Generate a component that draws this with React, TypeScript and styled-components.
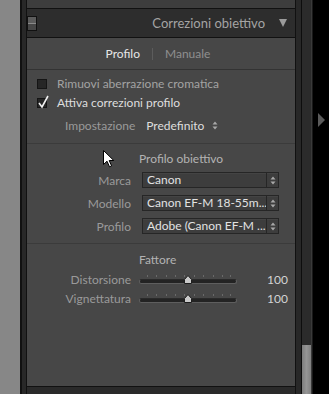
import React from "react";
import styled, { createGlobalStyle } from "styled-components";

const GlobalStyle = createGlobalStyle`
  html, body { margin: 0; padding: 0; background: #000; }
  body {
    width: 329px; height: 394px; overflow: hidden;
    font-family: Lato, "Open Sans", "Liberation Sans", sans-serif;
    font-size: 12px;
  }
  * { box-sizing: border-box; }
`;

const Frame = styled.div`
  position: relative;
  display: flex;
  width: 329px;
  height: 394px;
  background: #000;
`;

const LeftStrip = styled.div`
  width: 20px;
  background: #878787;
`;

const Gutter = styled.div`
  width: 6px;
  background: linear-gradient(to right, #111 0 2px, #282828 2px 100%);
`;

const Column = styled.div`
  width: 270px;
  display: flex;
  flex-direction: column;
  background: #2a2a2a;
  border-left: 1px solid #111;
  border-right: 1px solid #111;
`;

const PrevPanel = styled.div`
  height: 9px;
  background: #3d3d3d;
  border-bottom: 1px solid #111;
`;

const Header = styled.div`
  height: 28px;
  display: flex;
  align-items: center;
  background: #2d2d2d;
  padding-right: 4px;
`;

const SoloSwitch = styled.div`
  width: 10px;
  height: 15px;
  border: 1px solid #111;
  background: linear-gradient(to bottom, #5c5c5c 0 45%, #8a8a8a 45% 55%, #474747 55% 100%);
`;

const HeaderTitle = styled.div`
  flex: 1;
  text-align: right;
  font-size: 13px;
  color: #a4a4a4;
  padding-right: 14px;
`;

const HeaderArrow = styled.div`
  width: 0;
  height: 0;
  border-left: 4.5px solid transparent;
  border-right: 4.5px solid transparent;
  border-top: 8px solid #9b9b9b;
  margin-right: 4px;
`;

const Panel = styled.div`
  flex: 1;
  display: flex;
  flex-direction: column;
  background: #474747;
  border-top: 1px solid #111;
  border-bottom: 1px solid #111;
  margin-bottom: 7px;
`;

const Tabs = styled.div`
  height: 32px;
  display: flex;
  align-items: center;
  justify-content: center;
  gap: 12px;
  padding-right: 6px;
  border-bottom: 1px solid #333;
`;

const Tab = styled.span<{ $active?: boolean }>`
  color: ${(p) => (p.$active ? "#e6e6e6" : "#8f8f8f")};
`;

const TabDivider = styled.span`
  width: 1px;
  height: 12px;
  background: #5c5c5c;
`;

const Section = styled.div<{ $pt: number; $pb: number; $last?: boolean }>`
  padding-top: ${(p) => p.$pt}px;
  padding-bottom: ${(p) => p.$pb}px;
  border-bottom: ${(p) => (p.$last ? "none" : "1px solid #3b3b3b")};
`;

const CheckRow = styled.div`
  height: 19px;
  display: flex;
  align-items: center;
  padding-left: 10px;
`;

const CheckBox = styled.span`
  position: relative;
  width: 10px;
  height: 10px;
  background: #262626;
  border: 1px solid #151515;
  margin-right: 10px;
`;

const CheckMark = styled.svg`
  position: absolute;
  left: 0px;
  top: -4px;
`;

const CheckLabel = styled.span<{ $on?: boolean }>`
  color: ${(p) => (p.$on ? "#dedede" : "#a3a3a3")};
`;

const PresetRow = styled.div`
  height: 19px;
  margin-top: 4px;
  display: flex;
  align-items: center;
  padding-left: 38px;
  gap: 11px;
`;

const DimLabel = styled.span`
  color: #9a9a9a;
`;

const BrightValue = styled.span`
  color: #dedede;
  display: inline-flex;
  align-items: center;
  gap: 8px;
`;

const GroupTitle = styled.div`
  height: 16px;
  line-height: 16px;
  padding-left: 112px;
  color: #b3b3b3;
`;

const FieldGrid = styled.div`
  display: grid;
  grid-template-columns: 104px 137px;
  column-gap: 11px;
  row-gap: 7px;
  align-items: center;
  margin-top: 5px;
`;

const FieldLabel = styled.span`
  text-align: right;
  color: #9a9a9a;
`;

const Select = styled.div`
  height: 16px;
  display: flex;
  background: #3d3d3d;
  border: 1px solid #262626;
  box-shadow: inset 0 1px 0 #444;
`;

const SelectText = styled.span`
  flex: 1;
  padding-left: 4px;
  line-height: 14px;
  color: #e2e2e2;
  white-space: nowrap;
  overflow: hidden;
`;

const Stepper = styled.span`
  width: 12px;
  border-left: 1px solid #262626;
  display: flex;
  align-items: center;
  justify-content: center;
`;

const SliderGrid = styled.div`
  display: grid;
  grid-template-columns: 104px 98px 43px;
  column-gap: 8px;
  grid-auto-rows: 19px;
  align-items: center;
  margin-top: 2px;
`;

const SliderValue = styled.span`
  text-align: right;
  color: #d4d4d4;
`;

const Track = styled.div`
  position: relative;
  height: 19px;
`;

const TrackBar = styled.div`
  position: absolute;
  left: 0;
  right: 0;
  top: 9px;
  height: 5px;
  border-radius: 3px;
  background: #232323;
  border: 1px solid #5e5e5e;
  border-top-color: #2a2a2a;
`;

const Tick = styled.span`
  position: absolute;
  top: 5px;
  width: 1px;
  height: 2px;
  background: #6a6a6a;
`;

const Thumb = styled.svg`
  position: absolute;
  left: 44px;
  top: 5px;
`;

const RightGutter = styled.div`
  width: 6px;
  background: linear-gradient(to right, #282828 0 5px, #0d0d0d 5px 100%);
`;

const Scrollbar = styled.div`
  position: relative;
  width: 11px;
  background: linear-gradient(to right, #2b2b2b 0 9px, #3a3a3a 9px 10px, #1a1a1a 10px 11px);
`;

const ScrollThumb = styled.div`
  position: absolute;
  left: 0;
  width: 9px;
  top: 345px;
  bottom: 0;
  background: linear-gradient(to right, #7d7d7d, #959595 50%, #808080);
`;

const RightEdge = styled.div`
  flex: 1;
  background: #000;
  padding-top: 113px;
  padding-left: 5px;
`;

const SideArrow = styled.div`
  width: 0;
  height: 0;
  border-top: 7px solid transparent;
  border-bottom: 7px solid transparent;
  border-left: 7px solid #5a5a5a;
`;

const Cursor = styled.svg`
  position: absolute;
  left: 103px;
  top: 150px;
`;

const StepIcon = () => (
  <svg width="6" height="9" viewBox="0 0 6 9">
    <path d="M3 0.5 L5.5 3.5 H0.5 Z M3 8.5 L5.5 5.5 H0.5 Z" fill="#a8a8a8" />
  </svg>
);

const LensSelect = ({ text }: { text: string }) => (
  <Select>
    <SelectText>{text}</SelectText>
    <Stepper>
      <StepIcon />
    </Stepper>
  </Select>
);

const ticks = [8, 17, 27, 36, 45, 55, 64, 74, 83, 91];

const Slider = () => (
  <Track>
    {ticks.map((t) => (
      <Tick key={t} style={{ left: t }} />
    ))}
    <TrackBar />
    <Thumb width="10" height="10" viewBox="0 0 10 10">
      <path d="M5 0.5 L8.5 4.5 V8.5 H1.5 V4.5 Z" fill="#c9c9c9" stroke="#1e1e1e" strokeWidth="1" />
    </Thumb>
  </Track>
);

export default function App() {
  return (
    <>
      <GlobalStyle />
      <Frame>
        <LeftStrip />
        <Gutter />
        <Column>
          <PrevPanel />
          <Header>
            <SoloSwitch />
            <HeaderTitle>Correzioni obiettivo</HeaderTitle>
            <HeaderArrow />
          </Header>
          <Panel>
            <Tabs>
              <Tab $active>Profilo</Tab>
              <TabDivider />
              <Tab>Manuale</Tab>
            </Tabs>
            <Section $pt={4} $pb={8}>
              <CheckRow>
                <CheckBox />
                <CheckLabel>Rimuovi aberrazione cromatica</CheckLabel>
              </CheckRow>
              <CheckRow>
                <CheckBox>
                  <CheckMark width="12" height="14" viewBox="0 0 12 14">
                    <path d="M1 8 L4 12 L10 1" fill="none" stroke="#f0f0f0" strokeWidth="1.6" />
                  </CheckMark>
                </CheckBox>
                <CheckLabel $on>Attiva correzioni profilo</CheckLabel>
              </CheckRow>
              <PresetRow>
                <DimLabel>Impostazione</DimLabel>
                <BrightValue>
                  Predefinito
                  <StepIcon />
                </BrightValue>
              </PresetRow>
            </Section>
            <Section $pt={7} $pb={9}>
              <GroupTitle>Profilo obiettivo</GroupTitle>
              <FieldGrid>
                <FieldLabel>Marca</FieldLabel>
                <LensSelect text="Canon" />
                <FieldLabel>Modello</FieldLabel>
                <LensSelect text="Canon EF-M 18-55m..." />
                <FieldLabel>Profilo</FieldLabel>
                <LensSelect text="Adobe (Canon EF-M ..." />
              </FieldGrid>
            </Section>
            <Section $pt={8} $pb={0} $last>
              <GroupTitle>Fattore</GroupTitle>
              <SliderGrid>
                <FieldLabel>Distorsione</FieldLabel>
                <Slider />
                <SliderValue>100</SliderValue>
                <FieldLabel>Vignettatura</FieldLabel>
                <Slider />
                <SliderValue>100</SliderValue>
              </SliderGrid>
            </Section>
          </Panel>
        </Column>
        <RightGutter />
        <Scrollbar>
          <ScrollThumb />
        </Scrollbar>
        <RightEdge>
          <SideArrow />
        </RightEdge>
        <Cursor width="12" height="18" viewBox="0 0 12 18">
          <path d="M0.5 0.5 V14.5 L4 11.2 L6.5 16.8 L8.6 15.9 L6.2 10.5 H10.8 Z" fill="#fff" stroke="#000" strokeWidth="1" />
        </Cursor>
      </Frame>
    </>
  );
}
